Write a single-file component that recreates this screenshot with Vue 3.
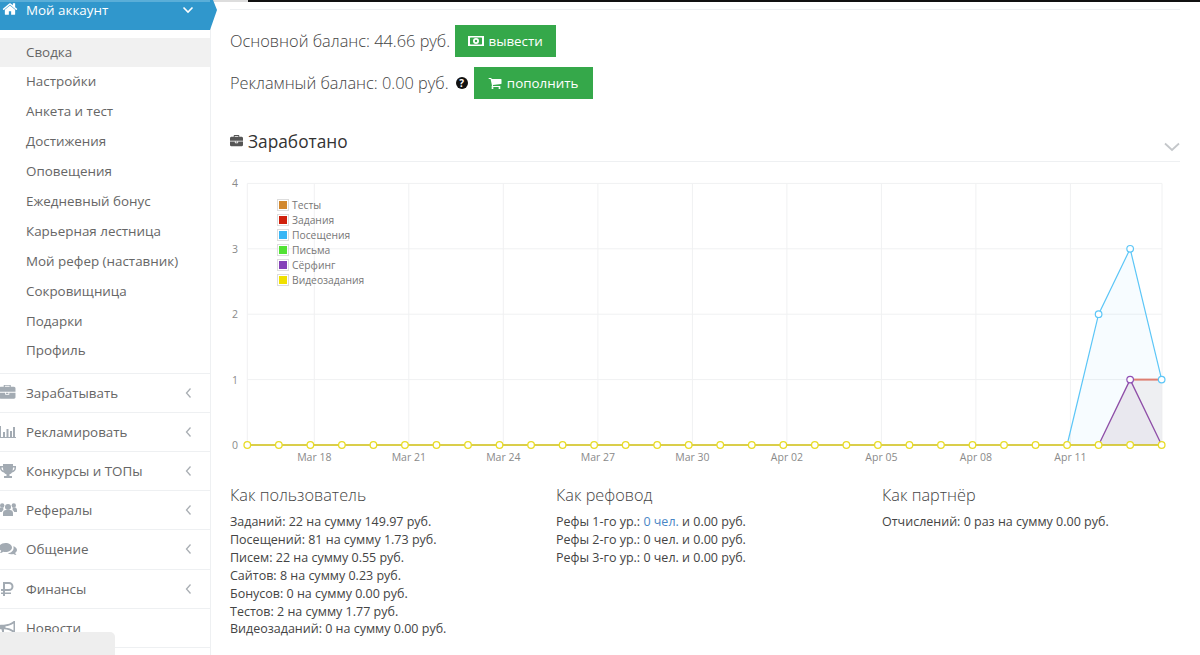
<script setup>
const subItems = ['Сводка', 'Настройки', 'Анкета и тест', 'Достижения', 'Оповещения', 'Ежедневный бонус', 'Карьерная лестница', 'Мой рефер (наставник)', 'Сокровищница', 'Подарки', 'Профиль']

const mainItems = [
  { label: 'Зарабатывать', icon: 'briefcase', arrow: true },
  { label: 'Рекламировать', icon: 'chart', arrow: true },
  { label: 'Конкурсы и ТОПы', icon: 'trophy', arrow: true },
  { label: 'Рефералы', icon: 'users', arrow: true },
  { label: 'Общение', icon: 'comments', arrow: true },
  { label: 'Финансы', icon: 'rub', arrow: true },
  { label: 'Новости', icon: 'bullhorn', arrow: false }
]

const legend = [
  { label: 'Тесты', color: '#d2882e' },
  { label: 'Задания', color: '#d0200c' },
  { label: 'Посещения', color: '#38b6f5' },
  { label: 'Письма', color: '#52e234' },
  { label: 'Сёрфинг', color: '#8540b8' },
  { label: 'Видеозадания', color: '#f0e000' }
]

const userStats = ['Заданий: 22 на сумму 149.97 руб.', 'Посещений: 81 на сумму 1.73 руб.', 'Писем: 22 на сумму 0.55 руб.', 'Сайтов: 8 на сумму 0.23 руб.', 'Бонусов: 0 на сумму 0.00 руб.', 'Тестов: 2 на сумму 1.77 руб.', 'Видеозаданий: 0 на сумму 0.00 руб.']

// координаты графика
const x0 = 247.3
const step = 31.53
const px = (i) => x0 + i * step
const py = (v) => 445 - v * 65.4

const yTicks = [0, 1, 2, 3, 4]
const xTicks = [
  { x: 314.3, label: 'Mar 18' },
  { x: 408.8, label: 'Mar 21' },
  { x: 503.3, label: 'Mar 24' },
  { x: 597.9, label: 'Mar 27' },
  { x: 692.4, label: 'Mar 30' },
  { x: 786.9, label: 'Apr 02' },
  { x: 881.4, label: 'Apr 05' },
  { x: 975.9, label: 'Apr 08' },
  { x: 1070.4, label: 'Apr 11' }
]
const allPoints = Array.from({ length: 30 }, (_, i) => i)
const poly = (pairs) => pairs.map(([i, v]) => px(i) + ',' + py(v)).join(' ')
const bluePts = [[26, 0], [27, 2], [28, 3], [29, 1]]
const redPts = [[28, 1], [29, 1]]
const purplePts = [[27, 0], [28, 1], [29, 0]]
</script>

<template>
  <div class="page">
    <aside class="sidebar">
      <div class="account">
        <svg class="home-icon" viewBox="0 0 1792 1792"><path fill="#fff" d="M1472 992v480q0 26-19 45t-45 19h-384v-384h-256v384h-384q-26 0-45-19t-19-45v-480q0-1 .5-3t.5-3l575-474 575 474q1 2 1 6zm223-69l-62 74q-8 9-21 11h-3q-13 0-21-7l-692-577-692 577q-12 8-24 7-13-2-21-11l-62-74q-8-10-7-23.500t11-21.500l719-599q32-26 76-26t76 26l244 204v-195q0-14 9-23t23-9h192q14 0 23 9t9 23v408l219 182q10 8 11 21.500t-7 23.500z"/></svg>
        <span class="account-label">Мой аккаунт</span>
        <svg class="account-chevron" viewBox="0 0 12 8"><path d="M1.500 1.500 6 6l4.500-4.500" fill="none" stroke="#fff" stroke-width="1.600"/></svg>
      </div>
      <ul class="sub-list">
        <li v-for="(item, i) in subItems" :key="item" class="sub-item" :class="{ active: i === 0 }">{{ item }}</li>
      </ul>
      <ul class="main-list">
        <li v-for="item in mainItems" :key="item.label" class="main-item">
          <svg class="menu-icon" viewBox="0 0 18 16">
            <path v-if="item.icon === 'briefcase'" transform="translate(0 -.5) scale(.0092)" d="M640 256h512v-128h-512v128zm1152 640v480q0 66-47 113t-113 47h-1472q-66 0-113-47t-47-113v-480h672v160q0 26 19 45t45 19h320q26 0 45-19t19-45v-160h672zm-768 0v128h-256v-128h256zm768-480v384h-1792v-384q0-66 47-113t113-47h352v-160q0-40 28-68t68-28h576q40 0 68 28t28 68v160h352q66 0 113 47t47 113z"/>
            <path v-else-if="item.icon === 'chart'" d="M1 2h1v11h15v1H1zM4 8h2v5H4zM7.500 5h2v8h-2zM11 7h2v6h-2zM14 3h2v10h-2z"/>
            <path v-else-if="item.icon === 'trophy'" d="M4 1h10v2h3v2c0 2.500-2 4-4 4.400-.6 1-1.400 1.600-2.500 1.900V13h2.500v2H5v-2h2.500v-1.700C6.400 11 5.600 10.400 5 9.400 3 9 1 7.500 1 5V3h3zM2.500 4.500V5c0 1.300 1 2.300 2 2.700-.3-1-.5-2-.5-3.200zM15.500 4.500H14c0 1.200-.2 2.200-.5 3.200 1-.4 2-1.400 2-2.700z"/>
            <g v-else-if="item.icon === 'users'">
              <circle cx="9" cy="5" r="3"/>
              <circle cx="3.200" cy="3.500" r="2.200"/>
              <circle cx="14.800" cy="3.500" r="2.200"/>
              <path d="M4 14V11c0-2 1.500-3 3-3h4c1.500 0 3 1 3 3v3zM0 10V8c0-1.500 1-2.500 2-2.500h2.500c-.3 1-.3 1.500 0 2.500C3.500 8.500 3 9.200 2.800 10zM18 10V8c0-1.500-1-2.500-2-2.500h-2.500c.3 1 .3 1.500 0 2.500 1 .5 1.500 1.200 1.700 2z"/>
            </g>
            <path v-else-if="item.icon === 'comments'" d="M6.500 2C10 2 13 4 13 6.500S10 11 6.500 11c-.8 0-1.500-.1-2.200-.3C3.300 11.500 2 12 1 12c.7-.8 1.100-1.600 1.200-2.400C.8 8.800 0 7.700 0 6.500 0 4 3 2 6.500 2zM14.300 5.200c2 .6 3.700 2 3.700 3.800 0 1.100-.7 2.100-1.800 2.800.1.800.5 1.500 1.300 2.200-1 0-2.200-.4-3.200-1.100-.7.200-1.300.3-2 .3-1.300 0-2.500-.3-3.500-.9 3.300-.4 5.800-2.500 5.800-5.300 0-.6-.1-1.200-.3-1.800z"/>
            <path v-else-if="item.icon === 'rub'" d="M4 1h6a4.500 4.500 0 0 1 0 9H6v1.500h6V13H6v2H4v-2H2v-1.500h2V10H2V8h2zm2 2v5h4a2.500 2.500 0 0 0 0-5z"/>
            <path v-else-if="item.icon === 'bullhorn'" d="M16 1v12h-1.200C12 10.700 8.500 9.500 5 9.300V12l1.500 3H3.800L2.500 9.300H2C.9 9.300 0 8.300 0 7s.9-2.300 2-2.300h3C8.500 4.500 12 3.300 14.800 1zM14.500 3.500C12.500 5 9.500 6 6.500 6.200v1.600c3 .2 6 1.200 8 2.700z"/>
          </svg>
          <span class="main-label">{{ item.label }}</span>
          <svg v-if="item.arrow" class="main-arrow" viewBox="0 0 7 12"><path d="M5.500 1.500 1.500 6l4 4.500" fill="none" stroke="#a9aeb3" stroke-width="1.300"/></svg>
        </li>
      </ul>
    </aside>

    <main class="content">
      <div class="top-line"></div>
      <div class="inner">
        <div class="balance">
          <div class="balance-row">
            <span>Основной баланс: 44.66 руб.</span>
            <button class="btn btn-out">
              <svg class="money-icon" viewBox="0 0 16 12"><path fill="#fff" fill-rule="evenodd" d="M0 1h16v10H0zM2.500 2.500 2 3v6l.5.5h11l.5-.5V3l-.5-.5zM8 3a3 3 0 1 1 0 6 3 3 0 0 1 0-6zM8 4.800a1.200 1.200 0 1 0 0 2.400 1.200 1.200 0 0 0 0-2.400z"/></svg>
              вывести
            </button>
          </div>
          <div class="balance-row">
            <span>Рекламный баланс: 0.00 руб.</span>
            <span class="help">?</span>
            <button class="btn btn-in">
              <svg class="cart-icon" viewBox="0 0 1792 1792"><path fill="#fff" d="M704 1536q0 52-38 90t-90 38-90-38-38-90 38-90 90-38 90 38 38 90zm896 0q0 52-38 90t-90 38-90-38-38-90 38-90 90-38 90 38 38 90zm128-1088v512q0 24-16.500 42.500t-40.500 21.500l-1044 122q13 60 13 70 0 16-24 64h920q26 0 45 19t19 45-19 45-45 19h-1024q-26 0-45-19t-19-45q0-11 8-31.500t16-36 21.500-40 15.500-29.500l-177-823h-204q-26 0-45-19t-19-45 19-45 45-19h256q16 0 28.500 6.500t19.500 15.500 13 24.500 8 26 5.500 29.500 4.500 26h1201q26 0 45 19t19 45z"/></svg>
              пополнить
            </button>
          </div>
        </div>

        <div class="earned-head">
          <svg class="earned-icon" viewBox="0 0 1792 1792"><path fill="#555" d="M640 256h512v-128h-512v128zm1152 640v480q0 66-47 113t-113 47h-1472q-66 0-113-47t-47-113v-480h672v160q0 26 19 45t45 19h320q26 0 45-19t19-45v-160h672zm-768 0v128h-256v-128h256zm768-480v384h-1792v-384q0-66 47-113t113-47h352v-160q0-40 28-68t68-28h576q40 0 68 28t28 68v160h352q66 0 113 47t47 113z"/></svg>
          <span class="earned-title">Заработано</span>
          <svg class="earned-chevron" viewBox="0 0 16 10"><path d="M1 1.500 8 8l7-6.500" fill="none" stroke="#c4c7ca" stroke-width="1.800"/></svg>
        </div>

        <div class="chart">
          <svg class="chart-svg" viewBox="230 175 950 290" width="950" height="290">
            <g stroke="#f0f1f2" stroke-width="1">
              <line v-for="v in yTicks" :key="'h' + v" :x1="x0" :x2="1162" :y1="py(v)" :y2="py(v)"/>
              <line v-for="t in xTicks" :key="t.label" :x1="t.x" :x2="t.x" y1="183.400" y2="445"/>
              <line :x1="x0" :x2="x0" y1="183.400" y2="445"/>
              <line x1="1162" x2="1162" y1="183.400" y2="445"/>
            </g>
            <text v-for="v in yTicks" :key="'y' + v" class="axis" x="232" :y="py(v) + 4">{{ v }}</text>
            <text v-for="t in xTicks" :key="'x' + t.label" class="axis" :x="t.x" y="461" text-anchor="middle">{{ t.label }}</text>

            <polygon :points="poly([[26, 0], ...bluePts.slice(1), [29, 0]])" fill="#38b6f5" fill-opacity=".04"/>
            <polygon :points="poly([[27, 0], [28, 1], [29, 1], [29, 0]])" fill="#a88080" fill-opacity=".1"/>
            <polygon :points="poly(purplePts)" fill="#8540b8" fill-opacity=".04"/>

            <polyline :points="poly(redPts)" fill="none" stroke="#de7f72" stroke-width="2"/>
            <polyline :points="poly(bluePts)" fill="none" stroke="#5cc6f7" stroke-width="1.200"/>
            <polyline :points="poly(purplePts)" fill="none" stroke="#8f4fa8" stroke-width="1.300"/>
            <line :x1="px(0)" :x2="px(29)" :y1="py(0)" :y2="py(0)" stroke="#d0c010" stroke-width="1.500"/>

            <circle v-for="p in bluePts.slice(1)" :key="'b' + p[0]" :cx="px(p[0])" :cy="py(p[1])" r="3.300" fill="#fff" stroke="#5cc6f7" stroke-width="1.200"/>
            <circle :cx="px(28)" :cy="py(1)" r="3.300" fill="#fff" stroke="#8f4fb5" stroke-width="1.200"/>
            <circle v-for="i in allPoints" :key="'p' + i" :cx="px(i)" :cy="py(0)" r="3.300" fill="#fff" stroke="#e8dc28" stroke-width="1.300"/>
          </svg>
          <ul class="legend">
            <li v-for="l in legend" :key="l.label" class="legend-row">
              <span class="swatch"><i :style="{ background: l.color }"></i></span>
              {{ l.label }}
            </li>
          </ul>
        </div>

        <div class="stats">
          <section>
            <h4>Как пользователь</h4>
            <p v-for="line in userStats" :key="line">{{ line }}</p>
          </section>
          <section>
            <h4>Как рефовод</h4>
            <p>Рефы 1-го ур.: <a class="link">0 чел.</a> и 0.00 руб.</p>
            <p>Рефы 2-го ур.: 0 чел. и 0.00 руб.</p>
            <p>Рефы 3-го ур.: 0 чел. и 0.00 руб.</p>
          </section>
          <section>
            <h4>Как партнёр</h4>
            <p>Отчислений: 0 раз на сумму 0.00 руб.</p>
          </section>
        </div>
      </div>
    </main>

    <div class="corner-box"></div>
  </div>
</template>

<style>
html, body {
  margin: 0;
  height: 655px;
  overflow: hidden;
  background: #fff;
}
</style>

<style scoped>
.page {
  display: flex;
  height: 655px;
  overflow: hidden;
  font-family: "Open Sans", "Noto Sans", sans-serif;
  color: #555;
}

ul {
  list-style: none;
  margin: 0;
  padding: 0;
}

/* Меню слева */
.sidebar {
  width: 210px;
  flex: none;
  border-right: 1px solid #eef0f2;
  box-sizing: content-box;
}

.account {
  position: relative;
  display: flex;
  align-items: flex-start;
  height: 30px;
  background: #3097cc;
  border-top: 2px solid #5aaed8;
  box-sizing: border-box;
  color: #fff;
  font-size: 13.400px;
}
.account::after {
  content: "";
  position: absolute;
  left: 100%;
  top: -2px;
  width: 7px;
  height: 30px;
  background: #3097cc;
  clip-path: polygon(0 0, 3px 0, 100% 10px, 0 100%);
}
.home-icon {
  width: 16px;
  height: 16px;
  margin: 0 0 0 2px;
  position: relative;
  top: -1px;
  flex: none;
}
.account-label {
  margin-left: 8px;
  line-height: 17px;
  flex: 1;
}
.account-chevron {
  width: 12px;
  height: 8px;
  margin: 4px 16px 0 0;
}

.sub-list {
  padding: 7.500px 0 6.500px;
  border-bottom: 1px solid #eef0f2;
}
.sub-item {
  height: 29.900px;
  line-height: 29.900px;
  padding-left: 26px;
  font-size: 13.400px;
  color: #666;
}
.sub-item.active {
  background: #f1f1f1;
}

.main-item {
  display: flex;
  align-items: center;
  height: 39.150px;
  box-sizing: border-box;
  border-bottom: 1px solid #eef0f2;
  font-size: 13.400px;
  color: #666;
}
.menu-icon {
  width: 18px;
  height: 16px;
  margin-left: -1px;
  flex: none;
  fill: #a3abb3;
}
.main-label {
  margin-left: 9px;
  flex: 1;
}
.main-arrow {
  width: 7px;
  height: 12px;
  margin-right: 18px;
}

/* Контент */
.content {
  flex: 1;
  min-width: 0;
}
.top-line {
  height: 2px;
  background: linear-gradient(90deg, #ddd 37px, #111 37px);
}
.inner {
  margin: 7px 20px 0 19px;
  border-top: 1px solid #eef0f2;
}

.balance {
  display: flex;
  flex-direction: column;
  gap: 10px;
  margin-top: 15px;
}
.balance-row {
  display: flex;
  align-items: center;
  height: 32px;
  font-size: 16.350px;
  font-weight: 300;
  color: #444;
}
.btn {
  display: flex;
  align-items: center;
  justify-content: center;
  height: 32px;
  border: none;
  padding: 0;
  background: #35a84a;
  color: #fff;
  font-family: inherit;
  font-size: 13.400px;
  font-weight: 500;
}
.btn-out {
  width: 101px;
  margin-left: 5px;
  gap: 4px;
}
.btn-in {
  width: 119px;
  margin-left: 6px;
  gap: 5px;
}
.money-icon {
  width: 16px;
  height: 12px;
}
.cart-icon {
  width: 14px;
  height: 14px;
}
.help {
  width: 12px;
  height: 12px;
  margin-left: 7px;
  border-radius: 50%;
  background: #111;
  color: #fff;
  font-size: 10px;
  font-weight: 700;
  line-height: 12px;
  text-align: center;
}

.earned-head {
  display: flex;
  align-items: center;
  gap: 5px;
  margin-top: 27px;
  padding-bottom: 5px;
  box-sizing: content-box;
  border-bottom: 1px solid #eef0f2;
  height: 30px;
}
.earned-icon {
  width: 13px;
  height: 13px;
  flex: none;
}
.earned-title {
  flex: 1;
  font-size: 17.300px;
  color: #333;
}
.earned-chevron {
  width: 16px;
  height: 10px;
  position: relative;
  top: 6px;
}

.chart {
  position: relative;
  margin-top: 13px;
  height: 290px;
}
.chart-svg {
  display: block;
}
.axis {
  font-family: "Open Sans", sans-serif;
  font-size: 10.500px;
  fill: #8a8a8a;
}
.legend {
  position: absolute;
  left: 47px;
  top: 22px;
  font-size: 10.300px;
  color: #777;
}
.legend-row {
  display: flex;
  align-items: center;
  gap: 3px;
  height: 15px;
}
.swatch {
  display: block;
  width: 12px;
  height: 12px;
  box-sizing: border-box;
  border: 1px solid #ddd;
  padding: 1px;
}
.swatch i {
  display: block;
  width: 100%;
  height: 100%;
}

.stats {
  display: grid;
  grid-template-columns: 326px 326px 1fr;
  margin-top: 19px;
}
.stats h4 {
  margin: 0 0 7px;
  font-size: 16.300px;
  font-weight: 300;
  line-height: 22px;
  color: #444;
}
.stats p {
  margin: 0;
  font-size: 12.500px;
  line-height: 17.900px;
  color: #444;
}
.link {
  color: #4a86c5;
}

.corner-box {
  position: absolute;
  left: 0;
  top: 632px;
  width: 115px;
  height: 23px;
  background: #eee;
  border-top-right-radius: 5px;
}
</style>
